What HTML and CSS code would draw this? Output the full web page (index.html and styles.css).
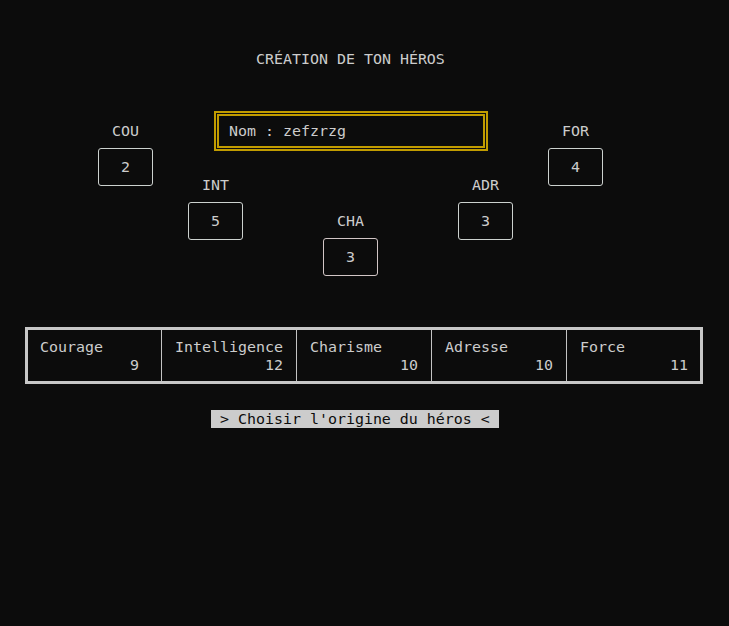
FILE: index.html
```html
<!DOCTYPE html>
<html lang="fr">
<head>
<meta charset="utf-8">
<title>Création de ton héros</title>
<link rel="stylesheet" href="styles.css">
</head>
<body>
<main class="screen">
  <h1 class="title">CRÉATION DE TON HÉROS</h1>

  <div class="name-box">Nom : zefzrzg</div>

  <div class="stat stat-cou"><span class="stat-label">COU</span><span class="stat-box">2</span></div>
  <div class="stat stat-int"><span class="stat-label">INT</span><span class="stat-box">5</span></div>
  <div class="stat stat-cha"><span class="stat-label">CHA</span><span class="stat-box">3</span></div>
  <div class="stat stat-adr"><span class="stat-label">ADR</span><span class="stat-box">3</span></div>
  <div class="stat stat-for"><span class="stat-label">FOR</span><span class="stat-box">4</span></div>

  <div class="stats-table">
    <div class="cell"><span class="cell-label">Courage</span><span class="cell-value">9 </span></div>
    <div class="cell"><span class="cell-label">Intelligence</span><span class="cell-value">12</span></div>
    <div class="cell"><span class="cell-label">Charisme</span><span class="cell-value">10</span></div>
    <div class="cell"><span class="cell-label">Adresse</span><span class="cell-value">10</span></div>
    <div class="cell"><span class="cell-label">Force</span><span class="cell-value">11</span></div>
  </div>

  <div class="choose"> &gt; Choisir l'origine du héros &lt; </div>
</main>
</body>
</html>
```
FILE: styles.css
```css
html, body {
  margin: 0;
  padding: 0;
  background: #0c0c0c;
  height: 100%;
}

.screen {
  box-sizing: border-box;
  height: 626px;
  padding: 14px 0 0 4px;
  display: grid;
  grid-template-columns: repeat(80, 9px);
  grid-auto-rows: 18px;
  font-family: "DejaVu Sans Mono", "Liberation Mono", monospace;
  font-size: 14.95px;
  line-height: 18px;
  color: #cccccc;
  white-space: pre;
}

.title {
  grid-column: 29 / span 21;
  grid-row: 3;
  margin: 0;
  font: inherit;
  font-weight: normal;
}

.name-box {
  grid-column: 24 / span 31;
  grid-row: 6 / span 3;
  margin: 7px 2px 7px 3px;
  border: 5px double #c19c00;
  padding: 6px 0 6px 10px;
}

.stat {
  grid-column-end: span 7;
  grid-row-end: span 4;
  display: flex;
  flex-direction: column;
  align-items: center;
}

.stat-label {
  height: 18px;
}

.stat-box {
  box-sizing: border-box;
  align-self: stretch;
  margin: 8px 4px;
  height: 38px;
  border: 1px solid #cdd2cf;
  border-radius: 3px;
  display: flex;
  align-items: center;
  justify-content: center;
}

.stat-cou { grid-column-start: 11; grid-row-start: 7; }
.stat-int { grid-column-start: 21; grid-row-start: 10; }
.stat-cha { grid-column-start: 36; grid-row-start: 12; }
.stat-adr { grid-column-start: 51; grid-row-start: 10; }
.stat-for { grid-column-start: 61; grid-row-start: 7; }

.stat-cha .stat-box {
  border-color: #d2c6c6;
}

.stats-table {
  grid-column: 3 / span 76;
  grid-row: 18 / span 4;
  align-self: start;
  margin: 7px 3px 0 3px;
  border: 3px solid #c8c8c8;
  display: grid;
  grid-template-columns: 133px 135px 135px 135px 134px;
}

.cell {
  display: flex;
  flex-direction: column;
  padding: 8px 13px 7px 13px;
  border-left: 1px solid #c4c4c4;
}

.cell:first-child {
  border-left: none;
  padding-left: 12px;
}

.cell:last-child {
  padding-right: 12px;
}

.cell-label,
.cell-value {
  height: 18px;
}

.cell-value {
  text-align: right;
}

.choose {
  grid-column: 24 / span 32;
  grid-row: 23;
  background: #cccccc;
  color: #0c0c0c;
}
```
